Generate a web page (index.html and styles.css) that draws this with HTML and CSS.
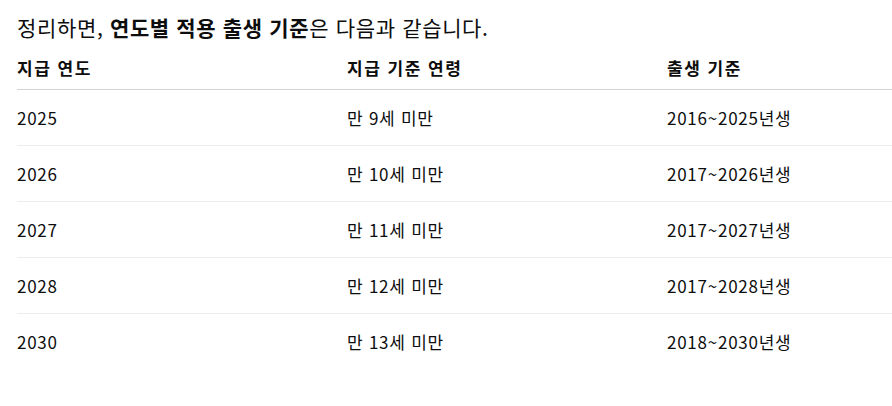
FILE: index.html
```html
<!DOCTYPE html>
<html lang="ko">
<head>
<meta charset="utf-8">
<link rel="stylesheet" href="styles.css">
</head>
<body>
<div class="page">
  <p class="intro">정리하면, <strong>연도별 적용 출생 기준</strong>은 다음과 같습니다.</p>
  <table class="tbl">
    <thead>
      <tr><th class="c1">지급 연도</th><th class="c2">지급 기준 연령</th><th class="c3">출생 기준</th></tr>
    </thead>
    <tbody>
      <tr><td>2025</td><td>만 9세 미만</td><td>2016~2025년생</td></tr>
      <tr><td>2026</td><td>만 10세 미만</td><td>2017~2026년생</td></tr>
      <tr><td>2027</td><td>만 11세 미만</td><td>2017~2027년생</td></tr>
      <tr><td>2028</td><td>만 12세 미만</td><td>2017~2028년생</td></tr>
      <tr><td>2030</td><td>만 13세 미만</td><td>2018~2030년생</td></tr>
    </tbody>
  </table>
</div>
</body>
</html>
```

FILE: styles.css
```css
html, body {
  margin: 0;
  padding: 0;
  background: #ffffff;
}
body {
  font-family: "Noto Sans CJK KR", "Noto Sans", sans-serif;
  color: #0d0d0d;
}
.page {
  padding: 13px 0 0 17px;
}
.intro {
  margin: 0 0 15px 0;
  font-size: 21px;
  line-height: 28px;
  font-weight: 400;
  letter-spacing: 0.65px;
}
.intro strong {
  font-weight: 700;
}
.tbl {
  border-collapse: collapse;
  width: 875px;
  table-layout: fixed;
  font-size: 17px;
}
.tbl th {
  text-align: left;
  font-weight: 700;
  padding: 0 0 9px 0;
  line-height: 24px;
  letter-spacing: 1.5px;
  border-bottom: 1px solid #d4d4d4;
}
.c1 { width: 330px; }
.c2 { width: 320px; }
.tbl td {
  padding: 0;
  height: 55px;
  line-height: 24px;
  letter-spacing: 0.75px;
  border-bottom: 1px solid #ececec;
  vertical-align: middle;
}
.tbl tbody tr:last-child td {
  border-bottom: none;
}
```
